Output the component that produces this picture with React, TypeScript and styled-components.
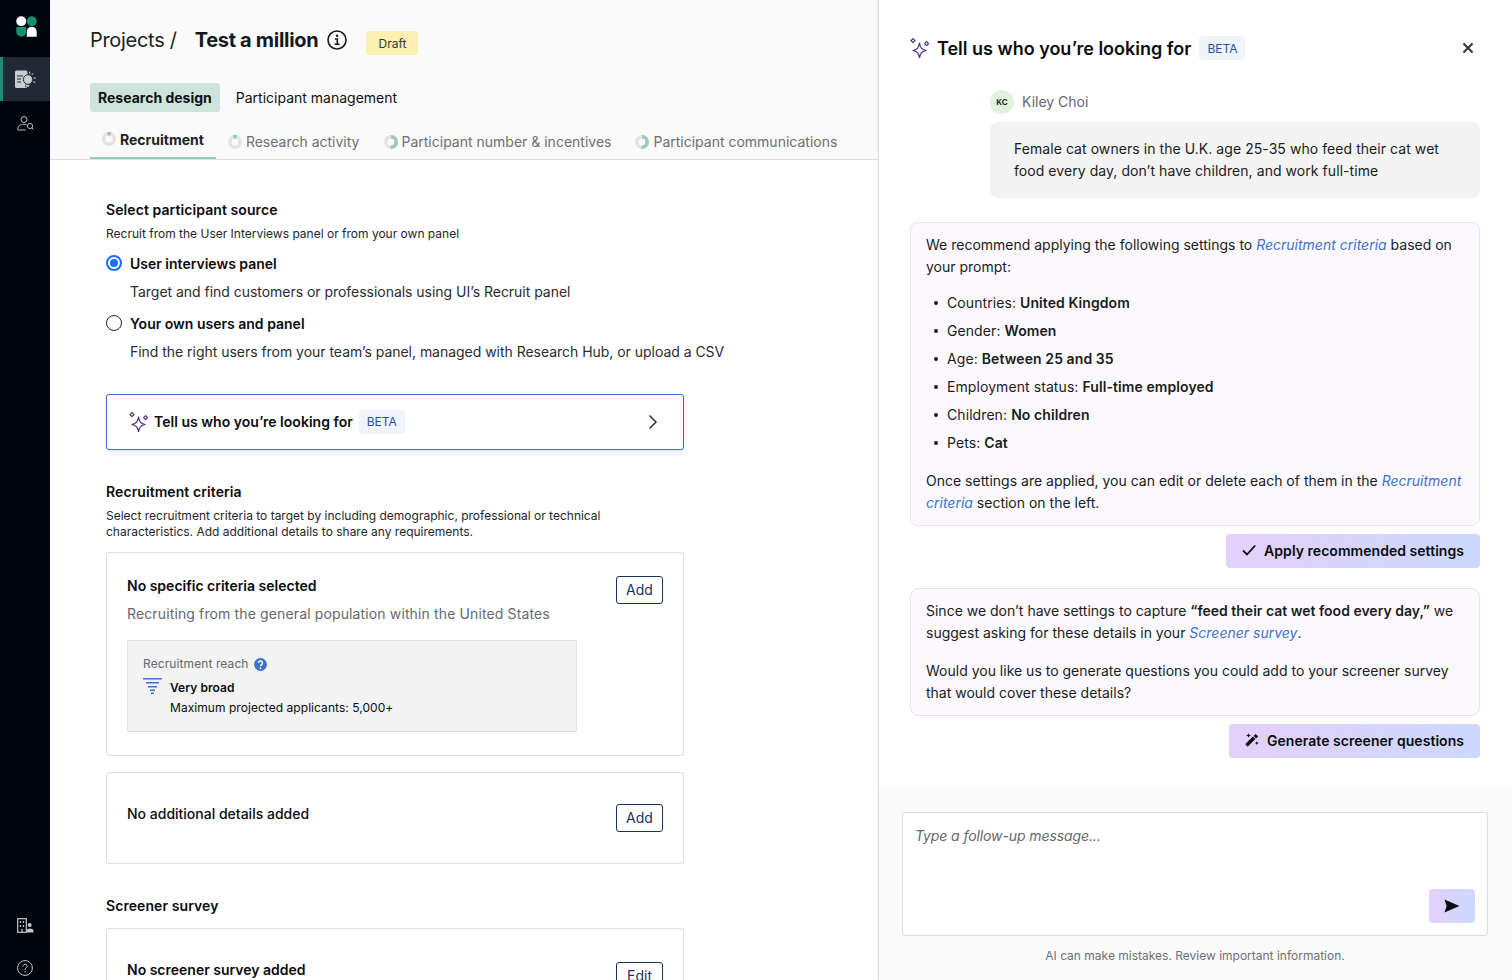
import * as React from "react";
import styled, { createGlobalStyle } from "styled-components";

const GlobalStyle = createGlobalStyle`
  html, body {
    margin: 0;
    padding: 0;
    height: 100%;
    overflow: hidden;
    background: #fff;
    font-family: Inter, "Liberation Sans", sans-serif;
    color: #0b0c10;
  }
  * { box-sizing: border-box; }
`;

const Page = styled.div`
  display: flex;
  width: 1512px;
  height: 980px;
  overflow: hidden;
`;

/* left rail */
const Rail = styled.nav`
  width: 50px;
  flex: none;
  background: #00060f;
  display: flex;
  flex-direction: column;
  padding-top: 16px;
`;
const RailLogo = styled.div`
  height: 41px;
  display: flex;
  justify-content: center;
  padding-left: 3px;
`;
const RailItem = styled.div<{ $active?: boolean }>`
  height: 44px;
  display: flex;
  align-items: center;
  justify-content: center;
  background: ${({ $active }) => ($active ? "#1f2a36" : "transparent")};
  border-left: 3px solid ${({ $active }) => ($active ? "#1a8f6f" : "transparent")};
  padding-right: 3px;
  color: #b9bec4;
`;
const RailFoot = styled.div`
  margin-top: auto;
  display: flex;
  flex-direction: column;
  gap: 19px;
`;
const RailBottom = styled.div`
  height: 24px;
  display: flex;
  align-items: center;
  justify-content: center;
  color: #c3c7cb;
`;

/* main column */
const Main = styled.main`
  width: 828px;
  flex: none;
  display: flex;
  flex-direction: column;
`;
const Header = styled.header`
  height: 160px;
  flex: none;
  background: #fafafa;
  border-bottom: 1px solid #e0e0e0;
  padding: 24px 0 0 40px;
`;
const TitleRow = styled.div`
  display: flex;
  align-items: center;
  height: 32px;
`;
const Crumb = styled.span`
  font-size: 20px;
  font-weight: 400;
  letter-spacing: -0.3px;
  color: #222;
`;
const ProjectName = styled.h1`
  margin: 0 0 0 18px;
  font-size: 20px;
  font-weight: 700;
  letter-spacing: -0.3px;
  color: #16181c;
`;
const InfoWrap = styled.span`
  display: flex;
  margin-left: 9px;
  color: #16181c;
`;
const DraftBadge = styled.span`
  margin-left: 19px;
  margin-top: 6px;
  width: 52px;
  height: 24px;
  border-radius: 3px;
  background: #fdf0b0;
  color: #3c3a2a;
  font-size: 12px;
  display: flex;
  align-items: center;
  justify-content: center;
`;
const TopTabs = styled.div`
  display: flex;
  align-items: center;
  gap: 16px;
  margin-top: 27px;
`;
const TopTab = styled.div<{ $active?: boolean }>`
  height: 29px;
  display: flex;
  align-items: center;
  padding: 0 8px;
  border-radius: 3px;
  font-size: 14px;
  font-weight: ${({ $active }) => ($active ? 700 : 400)};
  background: ${({ $active }) => ($active ? "#cde3dc" : "transparent")};
  margin-left: ${({ $active }) => ($active ? "0" : "-8px")};
  color: #111;
`;
const StepTabs = styled.div`
  display: flex;
  margin-top: 14px;
  height: 33px;
`;
const StepTab = styled.div<{ $active?: boolean }>`
  display: flex;
  align-items: center;
  gap: 4px;
  height: 33px;
  padding: ${({ $active }) => ($active ? "0 12px 5px 12px" : "0 12px 0 12px")};
  border-bottom: 2px solid ${({ $active }) => ($active ? "#9cc9b8" : "transparent")};
  font-size: 14px;
  font-weight: ${({ $active }) => ($active ? 700 : 400)};
  color: ${({ $active }) => ($active ? "#222" : "#6f6f6f")};
`;
const Content = styled.div`
  flex: 1;
  min-height: 0;
  overflow: hidden;
  padding: 42px 0 0 56px;
  background: #fff;
`;
const SectionTitle = styled.h2`
  margin: 0;
  font-size: 14px;
  line-height: 16px;
  font-weight: 600;
  letter-spacing: 0.08px;
  color: #0b0c10;
`;
const SectionHint = styled.p`
  margin: 8px 0 0;
  width: 578px;
  font-size: 12px;
  line-height: 16px;
  color: #24262a;
`;
const RadioRow = styled.div`
  display: flex;
  align-items: center;
  gap: 8px;
  margin-top: 11px;
  height: 20px;
  font-size: 14px;
  font-weight: 600;
`;
const Radio = styled.span<{ $checked?: boolean }>`
  width: 16px;
  height: 16px;
  border-radius: 50%;
  border: ${({ $checked }) => ($checked ? "2px solid #1a6dff" : "1.5px solid #222")};
  background: #fff;
  display: flex;
  align-items: center;
  justify-content: center;
  &::after {
    content: "";
    display: ${({ $checked }) => ($checked ? "block" : "none")};
    width: 8px;
    height: 8px;
    border-radius: 50%;
    background: #1a6dff;
  }
`;
const RadioHint = styled.div`
  margin: 9px 0 0 24px;
  font-size: 14px;
  line-height: 20px;
  letter-spacing: -0.03px;
  color: #2a2c30;
`;
const PromptBox = styled.div`
  width: 578px;
  height: 56px;
  margin-top: 32px;
  border: 1px solid #3f71cf;
  border-radius: 3px;
  box-shadow: 0 1px 3px rgba(63, 113, 207, 0.25);
  display: flex;
  align-items: center;
  gap: 5px;
  padding: 0 25px 1px 22px;
  background: #fff;
  font-size: 14px;
  font-weight: 600;
  letter-spacing: 0.03px;
`;
const BetaTag = styled.span`
  height: 24px;
  width: 46px;
  margin-left: 1px;
  border-radius: 4px;
  background: #eff4fc;
  color: #2b4f9c;
  font-size: 12px;
  font-weight: 400;
  display: flex;
  align-items: center;
  justify-content: center;
`;
const Chevron = styled.span`
  margin-left: auto;
  display: flex;
  color: #333;
`;
const SectionGap = styled.div<{ $h: number }>`
  height: ${({ $h }) => $h}px;
`;
const CriteriaCard = styled.div<{ $height: number }>`
  width: 578px;
  height: ${({ $height }) => $height}px;
  position: relative;
  border: 1px solid #dedede;
  border-radius: 3px;
  padding: 24px 20px;
  background: #fff;
`;
const CardTitle = styled.div<{ $weight?: number }>`
  font-size: 14px;
  line-height: 18px;
  font-weight: ${({ $weight }) => $weight ?? 600};
  color: #0b0c10;
`;
const CardHint = styled.div`
  margin-top: 10px;
  font-size: 14px;
  line-height: 18px;
  letter-spacing: 0.13px;
  color: #66686c;
`;
const CardButton = styled.button<{ $top: number }>`
  position: absolute;
  right: 20px;
  top: ${({ $top }) => $top}px;
  width: 47px;
  height: 28px;
  border: 1px solid #18345c;
  border-radius: 3px;
  background: #fff;
  color: #18345c;
  font-family: inherit;
  font-size: 14px;
  padding: 0 0 1px;
`;
const ReachBox = styled.div`
  margin-top: 17px;
  width: 450px;
  height: 92px;
  background: #f3f3f3;
  border: 1px solid #e2e2e2;
  border-radius: 2px;
  padding: 15px 15px;
`;
const ReachLabel = styled.div`
  display: flex;
  align-items: center;
  gap: 5px;
  font-size: 12px;
  line-height: 16px;
  letter-spacing: 0.1px;
  color: #66686c;
`;
const ReachBody = styled.div`
  display: flex;
  gap: 8px;
  margin-top: 6px;
`;
const ReachText = styled.div`
  font-size: 12px;
  line-height: 20px;
  letter-spacing: 0.05px;
  color: #0b0c10;
`;
const Strong = styled.strong`
  font-weight: 600;
`;

/* assistant panel */
const Panel = styled.aside`
  flex: 1;
  display: flex;
  flex-direction: column;
  border-left: 1px solid #dcdcdc;
  box-shadow: -1px 0 2px rgba(0, 0, 0, 0.04);
  background: #fff;
`;
const PanelBody = styled.div`
  height: 788px;
  flex: none;
  padding: 0 32px 0 31px;
`;
const PanelHead = styled.div`
  display: flex;
  align-items: center;
  height: 24px;
  margin-top: 36px;
  gap: 7px;
`;
const PanelTitle = styled.h2`
  margin: 0;
  font-size: 18px;
  font-weight: 600;
  color: #0b0c10;
`;
const CloseWrap = styled.span`
  margin-left: auto;
  margin-right: 6px;
  display: flex;
  color: #333;
`;
const UserRow = styled.div`
  display: flex;
  align-items: center;
  gap: 8px;
  margin: 30px 0 0 80px;
  height: 24px;
  font-size: 14px;
  color: #66686c;
`;
const UserName = styled.span`
  margin-top: -2px;
`;
const Avatar = styled.span`
  width: 24px;
  height: 24px;
  border-radius: 50%;
  background: #e0f2de;
  color: #1d2a1f;
  font-size: 8px;
  font-weight: 700;
  display: flex;
  align-items: center;
  justify-content: center;
`;
const Bubble = styled.div`
  margin: 8px 0 0 80px;
  height: 76px;
  padding: 16px 24px;
  border-radius: 8px;
  background: #f3f3f3;
  font-size: 14px;
  line-height: 22px;
  letter-spacing: 0.06px;
  color: #1a1c20;
`;
const ReplyCard = styled.div<{ $top: number; $height: number }>`
  margin-top: ${({ $top }) => $top}px;
  height: ${({ $height }) => $height}px;
  padding: 11px 15px;
  border: 1px solid #e9e1fa;
  border-radius: 8px;
  background: #fbf9fe;
  font-size: 14px;
  line-height: 22px;
  color: #1a1c20;
`;
const Para = styled.p<{ $gap?: number }>`
  margin: ${({ $gap }) => $gap ?? 0}px 0 0;
`;
const CriteriaLink = styled.em`
  color: #3f71cf;
  font-style: italic;
`;
const Bullets = styled.ul`
  list-style: none;
  margin: 14px 0 0;
  padding: 0;
`;
const Bullet = styled.li`
  position: relative;
  padding-left: 21px;
  height: 28px;
  line-height: 22px;
  letter-spacing: 0.08px;
  &::before {
    content: "";
    position: absolute;
    left: 8px;
    top: 9px;
    width: 4px;
    height: 4px;
    border-radius: 50%;
    background: #1a1c20;
  }
`;
const ActionRow = styled.div`
  display: flex;
  justify-content: flex-end;
  margin-top: 8px;
`;
const GradientButton = styled.button`
  height: 34px;
  display: flex;
  align-items: center;
  gap: 8px;
  padding: 0 16px 2px;
  border: 0;
  border-radius: 4px;
  background: linear-gradient(100deg, #e4d0fb 0%, #ccd9ff 100%);
  font-family: inherit;
  font-size: 14px;
  font-weight: 600;
  letter-spacing: 0.04px;
  color: #0b0c10;
`;
const PanelFooter = styled.div`
  flex: 1;
  background: #fafafa;
  padding: 24px 24px 0 23px;
`;
const MessageBox = styled.div`
  position: relative;
  height: 124px;
  border: 1px solid #dcdcdc;
  border-radius: 3px;
  background: #fff;
  padding: 14px 12px;
  font-size: 14px;
  line-height: 18px;
  font-style: italic;
  letter-spacing: -0.1px;
  color: #66686c;
`;
const SendButton = styled.button`
  position: absolute;
  right: 12px;
  bottom: 12px;
  width: 46px;
  height: 34px;
  border: 0;
  border-radius: 4px;
  background: linear-gradient(100deg, #e4d0fb 0%, #ccd9ff 100%);
  display: flex;
  align-items: center;
  justify-content: center;
  padding: 0;
`;
const Disclaimer = styled.div`
  margin-top: 12px;
  text-align: center;
  font-size: 12px;
  line-height: 16px;
  color: #6f7175;
`;

const Logo = () => (
  <svg width="21" height="21" viewBox="0 0 22 22">
    <circle cx="5.5" cy="5.5" r="5.2" fill="#fff" />
    <circle cx="16.5" cy="5.5" r="5.2" fill="#1a8f6f" />
    <path d="M0.3 11.5h10.4v5a5.2 5.2 0 0 1-10.4 0z" fill="#1a8f6f" />
    <path d="M11.3 21.7v-5.2a5.2 5.2 0 0 1 10.4 0v5.2z" fill="#fff" />
  </svg>
);

const ResearchIcon = () => (
  <svg width="21" height="19" viewBox="0 0 21 19">
    <rect x="0" y="0.5" width="12.5" height="17.5" rx="1.5" fill="#c9cdd1" />
    <path d="M2 6h6M2 9h4M2 12h4" stroke="#1f2a36" strokeWidth="1.2" />
    <ellipse cx="13" cy="9.5" rx="4.6" ry="4.8" fill="#c9cdd1" stroke="#1f2a36" strokeWidth="1" />
    <path d="M10.5 14.5h4v2.5h-4z" fill="#c9cdd1" stroke="#1f2a36" strokeWidth=".6" />
    <path d="M14.5 2l.4 1.6M18 3.5l-1 1.2M20.5 8h-1.6M20 12.5l-1.5-.7" stroke="#c9cdd1" strokeWidth="1" strokeLinecap="round" />
  </svg>
);

const ParticipantIcon = () => (
  <svg width="17" height="15" viewBox="0 0 17 15" fill="none" stroke="currentColor" strokeWidth="1">
    <circle cx="7" cy="3.5" r="3" />
    <path d="M0.8 14v-1.5c0-2.5 2.5-4.2 6.2-4.2 1 0 1.8.1 2.6.3M0.8 14h8" />
    <circle cx="13" cy="10" r="2.6" />
    <path d="M15 12l1.5 1.5" />
  </svg>
);

const BuildingIcon = () => (
  <svg width="17" height="15" viewBox="0 0 17 15" fill="none" stroke="currentColor">
    <rect x="0.7" y="0.7" width="8.6" height="13.6" strokeWidth="1.2" />
    <path d="M3.5 3v2M6.5 3v2M3.5 7v2M6.5 7v2M5 11v3" strokeWidth="1.3" />
    <circle cx="12.7" cy="7" r="2" fill="currentColor" stroke="none" />
    <path d="M9.8 14.5v-1.7c0-1.4 1.2-2.3 2.9-2.3s3.8.9 3.8 2.3v1.7z" fill="currentColor" stroke="none" />
  </svg>
);

const HelpIcon = () => (
  <svg width="16" height="16" viewBox="0 0 16 16" fill="none" stroke="currentColor" strokeWidth="1">
    <circle cx="8" cy="8" r="7.4" />
    <path d="M5.9 6.2a2.1 2.1 0 1 1 3.2 1.8c-.7.4-1.1.9-1.1 1.7" strokeLinecap="round" />
    <circle cx="8" cy="11.8" r=".7" fill="currentColor" stroke="none" />
  </svg>
);

const InfoIcon = () => (
  <svg width="20" height="20" viewBox="0 0 20 20" fill="none" stroke="currentColor">
    <circle cx="10" cy="10" r="9" strokeWidth="1.6" />
    <circle cx="10" cy="5.8" r="1.2" fill="currentColor" stroke="none" />
    <path d="M7.8 9h2.5v5M7.6 14.2h5" strokeWidth="1.6" />
  </svg>
);

const Progress = ({ value }: { value: number }) => {
  const length = 2 * Math.PI * 5.2;
  // small arcs sit centred on the top of the ring, larger ones start at 12 o'clock
  const angle = value < 0.2 ? -90 - value * 180 : -90;
  return (
    <svg width="14" height="14" viewBox="0 0 14 14" fill="none">
      <circle cx="7" cy="7" r="5.2" stroke="#e4e4e4" strokeWidth="3.6" />
      <circle
        cx="7"
        cy="7"
        r="5.2"
        stroke="#9cc9b8"
        strokeWidth="3.6"
        strokeDasharray={`${length * value} ${length}`}
        transform={`rotate(${angle} 7 7)`}
      />
    </svg>
  );
};

const Sparkles = ({ size }: { size: number }) => (
  <svg width={size} height={size} viewBox="0 0 20 20" fill="none" stroke="#4a2d80" strokeWidth="1.2" strokeLinejoin="round">
    <path d="M9.5 5c.8 4.6 2 6.4 6.5 7.5-4.5 1.1-5.7 2.9-6.5 7.5-.8-4.6-2-6.4-6.5-7.5 4.5-1.1 5.7-2.9 6.5-7.5z" />
    <path d="M3 .6l2 2-2 2-2-2z" />
    <path d="M16.6 3.6l2 2-2 2-2-2z" />
  </svg>
);

const CloseIcon = () => (
  <svg width="12" height="12" viewBox="0 0 12 12" stroke="currentColor" strokeWidth="2">
    <path d="M1.5 1.5l9 9M10.5 1.5l-9 9" />
  </svg>
);

const ChevronIcon = () => (
  <svg width="10" height="16" viewBox="0 0 10 16" fill="none" stroke="currentColor" strokeWidth="1.5">
    <path d="M1.5 1.5L8 8l-6.5 6.5" />
  </svg>
);

const QuestionBadge = () => (
  <svg width="13" height="13" viewBox="0 0 13 13">
    <circle cx="6.5" cy="6.5" r="6.5" fill="#3f71cf" />
    <path d="M4.5 5a2 2 0 1 1 3 1.7c-.7.4-1 .8-1 1.5" fill="none" stroke="#fff" strokeWidth="1.4" />
    <circle cx="6.5" cy="10.2" r=".9" fill="#fff" />
  </svg>
);

const FunnelIcon = () => (
  <svg width="19" height="16" viewBox="0 0 19 16" stroke="#3f71cf" strokeWidth="1.4">
    <path d="M0 .7h19M3 4.7h13M5 8.7h9M7 12.2h5M8 15.2h3" />
  </svg>
);

const CheckIcon = () => (
  <svg width="14" height="12" viewBox="0 0 14 12" fill="none" stroke="#0b0c10" strokeWidth="1.8">
    <path d="M1 6.5l4 4L13.2 1.5" />
  </svg>
);

const WandIcon = () => (
  <svg width="14" height="14" viewBox="0 0 14 14" fill="#0b0c10">
    <path d="M10.6.9l2.5 2.5-2 2-2.5-2.5z" />
    <path d="M7.9 3.6l2.5 2.5-7 7a1 1 0 0 1-1.4 0L.9 12a1 1 0 0 1 0-1.4z" />
    <path d="M3.5 .2l.7 1.6 1.6.7-1.6.7-.7 1.6-.7-1.6-1.6-.7 1.6-.7zM11.8 8.2l.6 1.3 1.4.6-1.4.6-.6 1.4-.6-1.4-1.4-.6 1.4-.6z" />
  </svg>
);

const SendIcon = () => (
  <svg width="16" height="14" viewBox="0 0 16 14" fill="#0b0c10">
    <path d="M0.5 0.5L15.5 7 0.5 13.5 2.6 7z" />
  </svg>
);

const steps = [
  { label: "Research activity", value: 0.1 },
  { label: "Participant number & incentives", value: 0.5 },
  { label: "Participant communications", value: 0.5 },
];

const settings = [
  ["Countries", "United Kingdom"],
  ["Gender", "Women"],
  ["Age", "Between 25 and 35"],
  ["Employment status", "Full-time employed"],
  ["Children", "No children"],
  ["Pets", "Cat"],
];

export default function App() {
  return (
    <Page>
      <GlobalStyle />
      <Rail>
        <RailLogo>
          <Logo />
        </RailLogo>
        <RailItem $active>
          <ResearchIcon />
        </RailItem>
        <RailItem>
          <ParticipantIcon />
        </RailItem>
        <RailFoot>
          <RailBottom>
            <BuildingIcon />
          </RailBottom>
          <RailBottom>
            <HelpIcon />
          </RailBottom>
        </RailFoot>
      </Rail>

      <Main>
        <Header>
          <TitleRow>
            <Crumb>Projects /</Crumb>
            <ProjectName>Test a million</ProjectName>
            <InfoWrap>
              <InfoIcon />
            </InfoWrap>
            <DraftBadge>Draft</DraftBadge>
          </TitleRow>
          <TopTabs>
            <TopTab $active>Research design</TopTab>
            <TopTab>Participant management</TopTab>
          </TopTabs>
          <StepTabs>
            <StepTab $active>
              <Progress value={0.1} />
              Recruitment
            </StepTab>
            {steps.map((step) => (
              <StepTab key={step.label}>
                <Progress value={step.value} />
                {step.label}
              </StepTab>
            ))}
          </StepTabs>
        </Header>
        <Content>
          <SectionTitle>Select participant source</SectionTitle>
          <SectionHint>Recruit from the User Interviews panel or from your own panel</SectionHint>
          <RadioRow>
            <Radio $checked />
            User interviews panel
          </RadioRow>
          <RadioHint>Target and find customers or professionals using UI’s Recruit panel</RadioHint>
          <RadioRow>
            <Radio />
            Your own users and panel
          </RadioRow>
          <RadioHint>Find the right users from your team’s panel, managed with Research Hub, or upload a CSV</RadioHint>
          <PromptBox>
            <Sparkles size={20} />
            Tell us who you’re looking for
            <BetaTag>BETA</BetaTag>
            <Chevron>
              <ChevronIcon />
            </Chevron>
          </PromptBox>
          <SectionGap $h={34} />
          <SectionTitle>Recruitment criteria</SectionTitle>
          <SectionHint>
            Select recruitment criteria to target by including demographic, professional or technical characteristics. Add additional details to share any requirements.
          </SectionHint>
          <SectionGap $h={12} />
          <CriteriaCard $height={204}>
            <CardTitle>No specific criteria selected</CardTitle>
            <CardHint>Recruiting from the general population within the United States</CardHint>
            <CardButton $top={23}>Add</CardButton>
            <ReachBox>
              <ReachLabel>
                Recruitment reach
                <QuestionBadge />
              </ReachLabel>
              <ReachBody>
                <FunnelIcon />
                <ReachText>
                  <Strong>Very broad</Strong>
                  <br />
                  Maximum projected applicants: 5,000+
                </ReachText>
              </ReachBody>
            </ReachBox>
          </CriteriaCard>
          <SectionGap $h={16} />
          <CriteriaCard $height={92}>
            <SectionGap $h={8} />
            <CardTitle $weight={500}>No additional details added</CardTitle>
            <CardButton $top={31}>Add</CardButton>
          </CriteriaCard>
          <SectionGap $h={34} />
          <SectionTitle>Screener survey</SectionTitle>
          <SectionGap $h={14} />
          <CriteriaCard $height={92}>
            <SectionGap $h={8} />
            <CardTitle>No screener survey added</CardTitle>
            <CardButton $top={33}>Edit</CardButton>
          </CriteriaCard>
        </Content>
      </Main>

      <Panel>
        <PanelBody>
          <PanelHead>
            <Sparkles size={20} />
            <PanelTitle>Tell us who you’re looking for</PanelTitle>
            <BetaTag>BETA</BetaTag>
            <CloseWrap>
              <CloseIcon />
            </CloseWrap>
          </PanelHead>
          <UserRow>
            <Avatar>KC</Avatar>
            <UserName>Kiley Choi</UserName>
          </UserRow>
          <Bubble>
            Female cat owners in the U.K. age 25-35 who feed their cat wet food every day, don’t have children, and work full-time
          </Bubble>
          <ReplyCard $top={24} $height={304}>
            <Para>
              We recommend applying the following settings to <CriteriaLink>Recruitment criteria</CriteriaLink> based on your prompt:
            </Para>
            <Bullets>
              {settings.map(([name, value]) => (
                <Bullet key={name}>
                  {name}: <Strong>{value}</Strong>
                </Bullet>
              ))}
            </Bullets>
            <Para $gap={10}>
              Once settings are applied, you can edit or delete each of them in the <CriteriaLink>Recruitment criteria</CriteriaLink> section on the left.
            </Para>
          </ReplyCard>
          <ActionRow>
            <GradientButton>
              <CheckIcon />
              Apply recommended settings
            </GradientButton>
          </ActionRow>
          <ReplyCard $top={20} $height={128}>
            <Para>
              Since we don’t have settings to capture <Strong>“feed their cat wet food every day,”</Strong> we suggest asking for these details in your <CriteriaLink>Screener survey</CriteriaLink>.
            </Para>
            <Para $gap={16}>
              Would you like us to generate questions you could add to your screener survey that would cover these details?
            </Para>
          </ReplyCard>
          <ActionRow>
            <GradientButton>
              <WandIcon />
              Generate screener questions
            </GradientButton>
          </ActionRow>
        </PanelBody>
        <PanelFooter>
          <MessageBox>
            Type a follow-up message...
            <SendButton>
              <SendIcon />
            </SendButton>
          </MessageBox>
          <Disclaimer>AI can make mistakes. Review important information.</Disclaimer>
        </PanelFooter>
      </Panel>
    </Page>
  );
}
